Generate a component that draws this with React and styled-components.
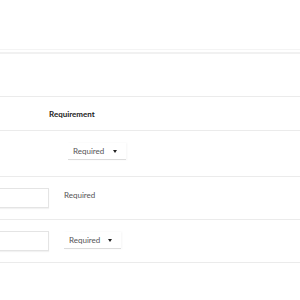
import React from "react";
import styled, { createGlobalStyle } from "styled-components";

const Global = createGlobalStyle`
  html, body { margin: 0; padding: 0; background: #fff; }
  body { font-family: Lato, "Open Sans", sans-serif; }
`;

const Page = styled.div`
  width: 300px;
  height: 300px;
  overflow: hidden;
  background: #fff;
`;

const TopBar = styled.div`
  height: 49px;
  border-bottom: 1px solid #f4f4f4;
`;

const Band = styled.div`
  height: 2px;
  margin-top: 2px;
  background: #f1f1f1;
`;

const Spacer = styled.div`
  height: 42px;
  border-bottom: 1px solid #ebebeb;
`;

const Row = styled.div`
  display: flex;
  align-items: ${(p) => p.$align || "center"};
  height: ${(p) => p.$h}px;
  border-bottom: 1px solid #ebebeb;
  box-sizing: border-box;
  padding-top: ${(p) => p.$pt || 0}px;
`;

const Cell = styled.div`
  width: ${(p) => p.$w}px;
  flex: none;
`;

const HeaderText = styled.div`
  font-size: 8px;
  font-weight: 700;
  color: #222;
`;

const PlainText = styled.div`
  font-size: 8px;
  color: #555;
  margin-top: ${(p) => p.$mt || 0}px;
`;

const Input = styled.div`
  width: 49px;
  height: 20px;
  box-sizing: border-box;
  border: 1px solid #e4e4e4;
  border-left: none;
  box-shadow: 0 1px 1px rgba(0, 0, 0, 0.05);
  background: #fff;
`;

const Select = styled.div`
  display: flex;
  align-items: center;
  justify-content: space-between;
  width: ${(p) => p.$w}px;
  height: 17px;
  box-sizing: border-box;
  padding: 0 9px 0 5px;
  margin-top: ${(p) => p.$mt || 0}px;
  border-bottom: 1px solid #dcdcdc;
  box-shadow: 1px 0 2px rgba(0, 0, 0, 0.04);
  font-size: 8px;
  color: #555;
`;

const Caret = styled.span`
  width: 0;
  height: 0;
  border-left: 2.5px solid transparent;
  border-right: 2.5px solid transparent;
  border-top: 3px solid #222;
`;

export default function App() {
  return (
    <Page>
      <Global />
      <TopBar />
      <Band />
      <Spacer />
      <Row $h={34}>
        <Cell $w={49} />
        <HeaderText>Requirement</HeaderText>
      </Row>
      <Row $h={46} $align="flex-start" $pt={12}>
        <Cell $w={68} />
        <Select $w={58}>
          Required
          <Caret />
        </Select>
      </Row>
      <Row $h={43} $align="flex-start" $pt={11}>
        <Cell $w={64}>
          <Input />
        </Cell>
        <PlainText $mt={2}>Required</PlainText>
      </Row>
      <Row $h={43} $align="flex-start" $pt={11}>
        <Cell $w={64}>
          <Input />
        </Cell>
        <Select $w={57} $mt={1}>
          Required
          <Caret />
        </Select>
      </Row>
    </Page>
  );
}
